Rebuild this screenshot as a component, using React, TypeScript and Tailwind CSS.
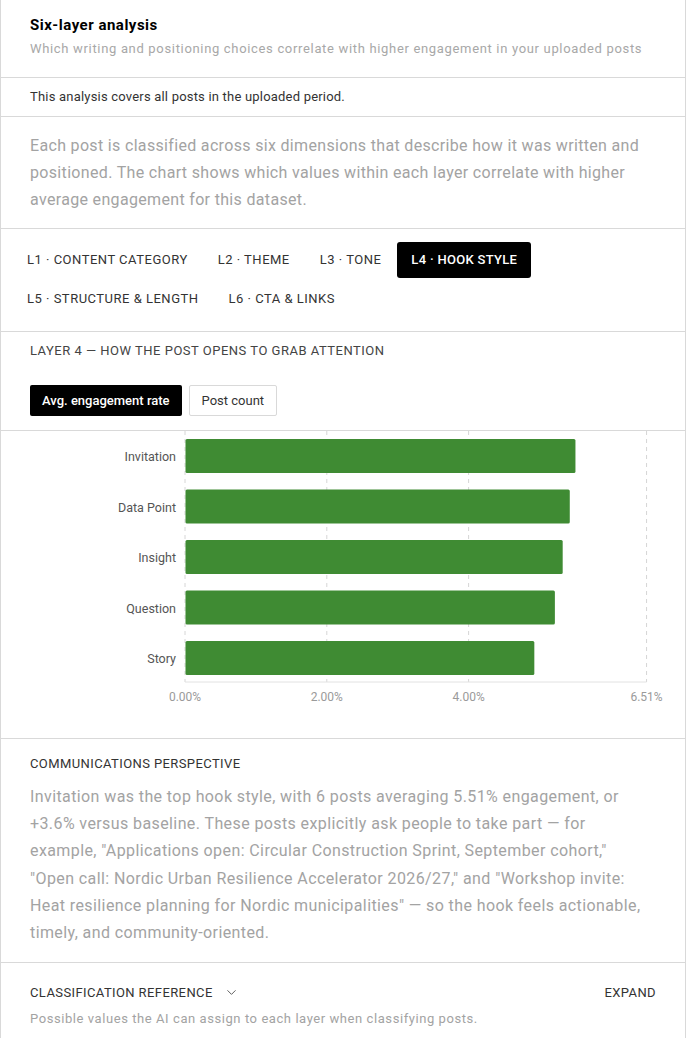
import React, { useState } from 'react';
import { ChevronDown } from 'lucide-react';

const tabs = [
  'L1 · Content category',
  'L2 · Theme',
  'L3 · Tone',
  'L4 · Hook style',
  'L5 · Structure & length',
  'L6 · CTA & links',
];

const rows = [
  { label: 'Invitation', value: 5.5 },
  { label: 'Data Point', value: 5.42 },
  { label: 'Insight', value: 5.32 },
  { label: 'Question', value: 5.21 },
  { label: 'Story', value: 4.92 },
];

const X0 = 184;
const PX_PER = 70.9;
const MAX = 6.51;

const HookChart: React.FC = () => {
  const ticks = [0, 2, 4, MAX];
  return (
    <svg width="684" height="307" className="block">
      {ticks.map((t) => {
        const x = X0 + t * PX_PER;
        return (
          <g key={t}>
            <line x1={x} x2={x} y1={0} y2={251} stroke="#d6d6d6" strokeDasharray="4 4" />
            <text x={x} y={270} textAnchor="middle" fontSize="12" fill="#9a9a9a" fontFamily="Roboto, sans-serif">
              {t.toFixed(2)}%
            </text>
          </g>
        );
      })}
      <line x1={X0} x2={X0 + MAX * PX_PER} y1={251} y2={251} stroke="#e2e2e2" />
      {rows.map((r, i) => {
        const y = 8 + i * 50.5;
        return (
          <g key={r.label}>
            <text x={175} y={y + 22} textAnchor="end" fontSize="12.5" fill="#555" fontFamily="Roboto, sans-serif">
              {r.label}
            </text>
            <rect x={X0 + 0.5} y={y} width={r.value * PX_PER} height={34} rx={1.5} fill="#3f8b33" />
          </g>
        );
      })}
    </svg>
  );
};

export default function App() {
  const [active, setActive] = useState(3);
  const [metric, setMetric] = useState<'rate' | 'count'>('rate');

  return (
    <div className="w-[686px] bg-white text-[#1a1a1a] border-x border-[#d9d9d9]" style={{ fontFamily: 'Roboto, "Liberation Sans", sans-serif' }}>
      {/* Header */}
      <div className="px-[29px] pt-[15px] pb-[18px] border-b border-[#d9d9d9]">
        <h2 className="text-[15px] font-bold leading-[20px] tracking-[0.5px] text-black">Six-layer analysis</h2>
        <p className="mt-[4px] text-[13px] leading-[20px] tracking-[0.67px] text-[#a8a8a8]">
          Which writing and positioning choices correlate with higher engagement in your uploaded posts
        </p>
      </div>

      <div className="px-[29px] py-[10px] border-b border-[#d9d9d9] text-[13px] leading-[18px] tracking-[0.2px] text-[#333]">
        This analysis covers all posts in the uploaded period.
      </div>

      <div className="px-[29px] pt-[15px] pb-[15px] border-b border-[#d9d9d9] text-[16px] leading-[27px] tracking-[0.33px] text-[#a3a3a3]">
        Each post is classified across six dimensions that describe how it was written and positioned. The chart shows
        which values within each layer correlate with higher average engagement for this dataset.
      </div>

      {/* Tabs */}
      <div className="px-[12px] pt-[13px] pb-[14px] border-b border-[#d9d9d9] flex flex-wrap gap-x-[2px] gap-y-[3px]">
        {tabs.map((t, i) => (
          <button
            key={t}
            onClick={() => setActive(i)}
            className={`h-[36px] px-[14px] rounded-[3px] text-[13px] uppercase ${
              active === i ? 'bg-black text-white font-medium tracking-[0.3px]' : 'text-[#333] tracking-[0.5px]'
            }`}
          >
            {t}
          </button>
        ))}
      </div>

      {/* Layer heading + metric toggle */}
      <div className="px-[29px] pt-[10px] pb-[14px] border-b border-[#d9d9d9]">
        <div className="text-[13px] leading-[18px] uppercase tracking-[0.5px] text-[#444]">
          Layer 4 — How the post opens to grab attention
        </div>
        <div className="mt-[25px] flex gap-[7px]">
          <button
            onClick={() => setMetric('rate')}
            className={`h-[31px] px-[12px] rounded-[2px] text-[13px] font-medium ${
              metric === 'rate' ? 'bg-black text-white' : 'border border-[#d9d9d9] text-[#333]'
            }`}
          >
            Avg. engagement rate
          </button>
          <button
            onClick={() => setMetric('count')}
            className={`h-[31px] px-[12px] rounded-[2px] text-[13px] ${
              metric === 'count' ? 'bg-black text-white' : 'border border-[#d9d9d9] text-[#333]'
            }`}
          >
            Post count
          </button>
        </div>
      </div>

      {/* Chart */}
      <div className="border-b border-[#d9d9d9]">
        <HookChart />
      </div>

      {/* Perspective */}
      <div className="px-[29px] pt-[16px] pb-[16px] border-b border-[#d9d9d9]">
        <div className="text-[13px] leading-[18px] uppercase tracking-[0.4px] text-[#333]">Communications perspective</div>
        <p className="mt-[10px] max-w-[618px] text-[16px] leading-[27.2px] tracking-[0.4px] text-[#a3a3a3]">
          Invitation was the top hook style, with 6 posts averaging 5.51% engagement, or +3.6% versus baseline. These
          posts explicitly ask people to take part — for example, "Applications open: Circular Construction Sprint,
          September cohort," "Open call: Nordic Urban Resilience Accelerator 2026/27," and "Workshop invite: Heat
          resilience planning for Nordic municipalities" — so the hook feels actionable, timely, and community-oriented.
        </p>
      </div>

      {/* Classification reference */}
      <div className="px-[29px] pt-[20px] pb-[12px]">
        <div className="flex items-center justify-between">
          <div className="flex items-center gap-[11px] text-[13px] leading-[18px] uppercase tracking-[0.4px] text-[#333]">
            Classification reference
            <ChevronDown className="w-[15px] h-[15px] text-[#555]" strokeWidth={1.5} />
          </div>
          <button className="text-[13px] uppercase tracking-[0.4px] text-[#333]">Expand</button>
        </div>
        <p className="mt-[7px] text-[13px] leading-[18px] tracking-[0.57px] text-[#a3a3a3]">
          Possible values the AI can assign to each layer when classifying posts.
        </p>
      </div>
    </div>
  );
}
